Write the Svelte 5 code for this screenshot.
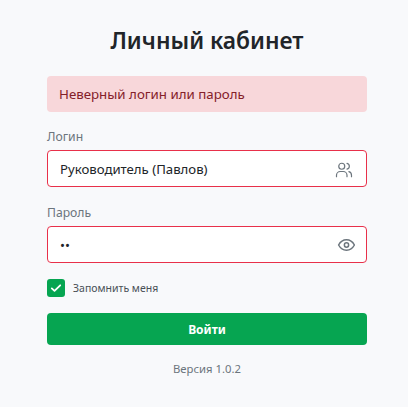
<script>
  let login = $state('Руководитель (Павлов)');
  let password = $state('12');
  let remember = $state(true);
</script>

<main class="login">
  <h1>Личный кабинет</h1>
  <div class="alert">Неверный логин или пароль</div>

  <label class="field">
    <span class="label">Логин</span>
    <span class="control">
      <input type="text" bind:value={login} />
      <svg class="users" viewBox="0 0 24 24" width="18" height="18" fill="none" stroke="#6c757d" stroke-width="1.6" stroke-linecap="round" stroke-linejoin="round" aria-hidden="true">
        <circle cx="9" cy="7" r="4" />
        <path d="M2 21v-2a5 5 0 0 1 5-5h4a5 5 0 0 1 5 5v2" />
        <path d="M16 3.1a4 4 0 0 1 0 7.8" />
        <path d="M22 21v-2a5 5 0 0 0-3.5-4.8" />
      </svg>
    </span>
  </label>

  <label class="field">
    <span class="label">Пароль</span>
    <span class="control">
      <input type="password" bind:value={password} />
      <svg class="eye" viewBox="0 0 24 24" width="19" height="19" fill="none" stroke="#6c757d" stroke-width="1.9" stroke-linecap="round" stroke-linejoin="round" aria-hidden="true">
        <path d="M2 12s3.6-6.5 10-6.5S22 12 22 12s-3.6 6.5-10 6.5S2 12 2 12z" />
        <circle cx="12" cy="12" r="2.7" />
      </svg>
    </span>
  </label>

  <label class="remember">
    <input type="checkbox" bind:checked={remember} />
    <span class="box">
      <svg viewBox="0 0 12 12" width="12" height="12" fill="none" stroke="#fff" stroke-width="1.8" stroke-linecap="round" stroke-linejoin="round" aria-hidden="true">
        <path d="M1.8 6.4l2.7 2.5 5.7-5.6" />
      </svg>
    </span>
    <span>Запомнить меня</span>
  </label>

  <button type="button">Войти</button>
  <p class="version">Версия 1.0.2</p>
</main>

<style>
  :global(body) {
    background: #f8f9fb;
    font-family: "Noto Sans", "Open Sans", sans-serif;
  }
  .login {
    width: 320px;
    margin-left: 47px;
    padding-top: 24px;
    display: flex;
    flex-direction: column;
  }
  h1 {
    margin: 0 0 19px;
    font-size: 22.8px;
    line-height: 33px;
    font-weight: 600;
    color: #212529;
    text-align: center;
  }
  .alert {
    height: 36px;
    box-sizing: border-box;
    padding: 0 12px;
    display: flex;
    align-items: center;
    background: #f8d7da;
    border-radius: 4px;
    color: #842029;
    font-size: 13.3px;
    margin-bottom: 16px;
  }
  .field {
    display: flex;
    flex-direction: column;
    gap: 4px;
    margin-bottom: 17px;
  }
  .field + .field {
    margin-bottom: 16px;
  }
  .label {
    font-size: 12.2px;
    line-height: 18px;
    color: #6c757d;
  }
  .control {
    position: relative;
    display: block;
  }
  .control input {
    width: 100%;
    height: 37px;
    box-sizing: border-box;
    padding: 0 40px 0 12px;
    border: 1px solid #e8304a;
    border-radius: 4px;
    background: #fff;
    color: #212529;
    font: inherit;
    font-size: 13.2px;
    outline: none;
  }
  .control svg {
    position: absolute;
    top: 50%;
    transform: translateY(-50%);
  }
  .users {
    right: 14px;
    margin-top: 1px;
  }
  .eye {
    right: 11px;
  }
  .remember {
    display: flex;
    align-items: center;
    gap: 8px;
    font-size: 10.5px;
    color: #495057;
    margin-bottom: 16px;
  }
  .remember input {
    position: absolute;
    opacity: 0;
  }
  .box {
    width: 18px;
    height: 18px;
    border-radius: 3px;
    background: #06a551;
    display: flex;
    align-items: center;
    justify-content: center;
  }
  button {
    height: 32px;
    border: none;
    border-radius: 4px;
    background: #06a551;
    color: #fff;
    font: inherit;
    font-size: 12px;
    font-weight: 700;
    margin-bottom: 15px;
  }
  .version {
    margin: 0;
    font-size: 11.3px;
    line-height: 18px;
    color: #6c757d;
    text-align: center;
  }
</style>
